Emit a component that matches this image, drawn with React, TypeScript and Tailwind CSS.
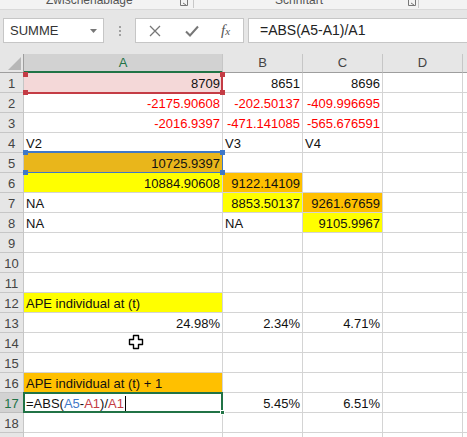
import React from "react";

type Cell = {
  v?: string;
  right?: boolean;
  red?: boolean;
  bg?: string;
};

const font = { fontFamily: '"Liberation Sans", Arial, sans-serif' };

const rows: Cell[][] = [
  [{ v: "8709", right: true, bg: "bg-[#f4d8d8]" }, { v: "8651", right: true }, { v: "8696", right: true }, {}],
  [{ v: "-2175.90608", right: true, red: true }, { v: "-202.50137", right: true, red: true }, { v: "-409.996695", right: true, red: true }, {}],
  [{ v: "-2016.9397", right: true, red: true }, { v: "-471.141085", right: true, red: true }, { v: "-565.676591", right: true, red: true }, {}],
  [{ v: "V2" }, { v: "V3" }, { v: "V4" }, {}],
  [{ v: "10725.9397", right: true, bg: "bg-[#e9b61b]" }, {}, {}, {}],
  [{ v: "10884.90608", right: true, bg: "bg-[#ffff00]" }, { v: "9122.14109", right: true, bg: "bg-[#ffc000]" }, {}, {}],
  [{ v: "NA" }, { v: "8853.50137", right: true, bg: "bg-[#ffff00]" }, { v: "9261.67659", right: true, bg: "bg-[#ffc000]" }, {}],
  [{ v: "NA" }, { v: "NA" }, { v: "9105.9967", right: true, bg: "bg-[#ffff00]" }, {}],
  [{}, {}, {}, {}],
  [{}, {}, {}, {}],
  [{}, {}, {}, {}],
  [{ v: "APE individual at (t)", bg: "bg-[#ffff00]" }, {}, {}, {}],
  [{ v: "24.98%", right: true }, { v: "2.34%", right: true }, { v: "4.71%", right: true }, {}],
  [{}, {}, {}, {}],
  [{}, {}, {}, {}],
  [{ v: "APE individual at (t) + 1", bg: "bg-[#ffc000]" }, {}, {}, {}],
  [{}, { v: "5.45%", right: true }, { v: "6.51%", right: true }, {}],
  [{}, {}, {}, {}],
  [{}, {}, {}, {}],
];

const widths = ["w-[199px]", "w-[80px]", "w-[80px]", "w-[80px]"];

function Handle({ className }: { className: string }) {
  return <div className={`absolute z-20 h-[5px] w-[5px] ${className}`} />;
}

function Overlay({ row }: { row: number }) {
  if (row === 1) {
    return (
      <>
        <div className="absolute bottom-[-2px] right-[-1px] top-0 left-0 z-10 border-b-2 border-r-2 border-[#c43c45]" />
        <Handle className="-left-px -top-px bg-[#c43c45]" />
        <Handle className="-right-[3px] -top-px bg-[#c43c45]" />
        <Handle className="-left-px -bottom-[3px] bg-[#c43c45]" />
        <Handle className="-right-[3px] -bottom-[3px] bg-[#c43c45]" />
      </>
    );
  }
  if (row === 5) {
    return (
      <>
        <div className="absolute -top-[2px] -bottom-px left-0 right-[-1px] z-10 border-t-2 border-b border-r border-[#3f78c8]" />
        <Handle className="-left-px -top-[3px] bg-[#3f78c8]" />
        <Handle className="-right-[3px] -top-[3px] bg-[#3f78c8]" />
        <Handle className="-left-px -bottom-[3px] bg-[#3f78c8]" />
        <Handle className="-right-[3px] -bottom-[3px] bg-[#3f78c8]" />
      </>
    );
  }
  if (row === 17) {
    return (
      <>
        <div className="absolute -top-px -bottom-px -left-px -right-px z-10 border-2 border-[#217346]" />
        <div className="absolute -bottom-[3px] -right-[3px] z-20 h-[5px] w-[5px] border border-white bg-[#217346]" />
      </>
    );
  }
  return null;
}

function Cursor() {
  return (
    <svg width="16" height="16" viewBox="0 0 16 16" className="absolute left-[104px] top-[1px] z-10">
      <path
        d="M5.5 1.5h5v4h4v5h-4v4h-5v-4h-4v-5h4z"
        fill="#fff"
        stroke="#000"
        strokeWidth="1.4"
        strokeLinejoin="round"
      />
    </svg>
  );
}

function SheetRow({ n, cells }: { n: number; cells: Cell[] }) {
  const active = n === 17;
  return (
    <div className="flex h-[20px]">
      <div
        className={`flex w-[24px] shrink-0 items-end justify-center border-b border-r leading-[16px] ${
          active
            ? "border-r-[#217346] border-b-[#bdbdbd] bg-[#d2d2d2] text-[#217346]"
            : "border-[#c6c6c6] bg-[#e6e6e6] text-[#444]"
        }`}
      >
        {n <= 18 ? n : ""}
      </div>
      {cells.map((c, i) => (
        <div
          key={i}
          className={`relative flex shrink-0 items-end border-b border-r border-[#d4d4d4] px-[2px] leading-[16px] whitespace-nowrap ${
            widths[i]
          } ${c.right ? "justify-end" : "justify-start"} ${c.red ? "text-[#ff0000]" : "text-[#111]"} ${c.bg ?? "bg-white"}`}
        >
          {i === 0 && active ? (
            <span className="flex items-end">
              =ABS(<span className="text-[#3f78c8]">A5</span>-<span className="text-[#c43c45]">A1</span>)/
              <span className="text-[#c43c45]">A1</span>
              <span className="mb-[1px] ml-[1px] h-[15px] w-px bg-black" />
            </span>
          ) : (
            c.v
          )}
          {i === 0 && <Overlay row={n} />}
          {i === 0 && n === 14 && <Cursor />}
        </div>
      ))}
      <div className="flex-1 border-b border-[#d4d4d4] bg-white" />
    </div>
  );
}

export default function App() {
  return (
    <div className="h-[437px] w-[467px] overflow-hidden bg-white text-[13px]" style={font}>
      {/* ribbon tail */}
      <div className="relative h-[10px] overflow-hidden border-b border-[#d9d9d9] bg-[#f3f3f3] text-[12px] text-[#555]">
        <span className="absolute left-[46px] top-[-9px]">Zwischenablage</span>
        <svg width="8" height="6" viewBox="0 0 8 6" className="absolute left-[180px] top-0">
          <path d="M0.5 0v5.5h7V0M3 3l3 2" fill="none" stroke="#777" strokeWidth="1" />
        </svg>
        <div className="absolute left-[193px] top-0 h-[8px] w-px bg-[#c8c8c8]" />
        <span className="absolute left-[275px] top-[-9px]">Schriftart</span>
        <svg width="8" height="6" viewBox="0 0 8 6" className="absolute left-[408px] top-0">
          <path d="M0.5 0v5.5h7V0M3 3l3 2" fill="none" stroke="#777" strokeWidth="1" />
        </svg>
        <div className="absolute left-[418px] top-0 h-[8px] w-px bg-[#c8c8c8]" />
      </div>

      {/* formula bar */}
      <div className="flex h-[44px] items-start bg-[#e6e6e6] pt-[8px]">
        <div className="ml-[3px] flex h-[25px] w-[101px] items-center justify-between border border-[#c6c6c6] bg-white pl-[6px] pr-[6px] text-[#333]">
          <span>SUMME</span>
          <svg width="7" height="4" viewBox="0 0 7 4">
            <path d="M0 0h7L3.5 4z" fill="#777" />
          </svg>
        </div>
        <div className="flex h-[25px] w-[31px] flex-col items-center justify-center gap-[2px]">
          <span className="h-[2px] w-[2px] bg-[#a0a0a0]" />
          <span className="h-[2px] w-[2px] bg-[#a0a0a0]" />
          <span className="h-[2px] w-[2px] bg-[#a0a0a0]" />
        </div>
        <div className="flex h-[25px] w-[109px] items-center border border-[#c6c6c6] bg-white">
          <svg width="12" height="12" viewBox="0 0 12 12" className="ml-[13px]">
            <path d="M1 1l10 10M11 1L1 11" stroke="#777" strokeWidth="1.3" />
          </svg>
          <svg width="14" height="12" viewBox="0 0 14 12" className="ml-[24px]">
            <path d="M1 6.5l4 4L13 1.5" fill="none" stroke="#777" strokeWidth="2" />
          </svg>
          <span
            className="ml-[22px] text-[15px] italic text-[#555]"
            style={{ fontFamily: '"Liberation Serif", "Times New Roman", serif' }}
          >
            f<span className="text-[11px]">x</span>
          </span>
        </div>
        <div className="ml-[4px] flex h-[25px] flex-1 items-center border border-r-0 border-[#c6c6c6] bg-white pl-[11px] text-[14px] text-[#222]">
          =ABS(A5-A1)/A1
        </div>
      </div>

      {/* column headers */}
      <div className="flex h-[19px]">
        <div className="relative w-[24px] shrink-0 border-b border-r border-[#9e9e9e] bg-[#e6e6e6]">
          <svg width="13" height="13" viewBox="0 0 13 13" className="absolute bottom-[2px] right-[2px]">
            <path d="M13 0v13H0z" fill="#b7b7b7" />
          </svg>
        </div>
        <div className="flex w-[199px] shrink-0 items-center justify-center border-b-2 border-r border-b-[#217346] border-r-[#c6c6c6] bg-[#d2d2d2] text-[#217346]">
          A
        </div>
        {["B", "C", "D"].map((l) => (
          <div
            key={l}
            className="flex w-[80px] shrink-0 items-center justify-center border-b border-r border-b-[#9e9e9e] border-r-[#c6c6c6] bg-[#e6e6e6] text-[#444]"
          >
            {l}
          </div>
        ))}
        <div className="flex-1 border-b border-[#9e9e9e] bg-[#e6e6e6]" />
      </div>

      {rows.map((r, i) => (
        <SheetRow key={i} n={i + 1} cells={r} />
      ))}
    </div>
  );
}
